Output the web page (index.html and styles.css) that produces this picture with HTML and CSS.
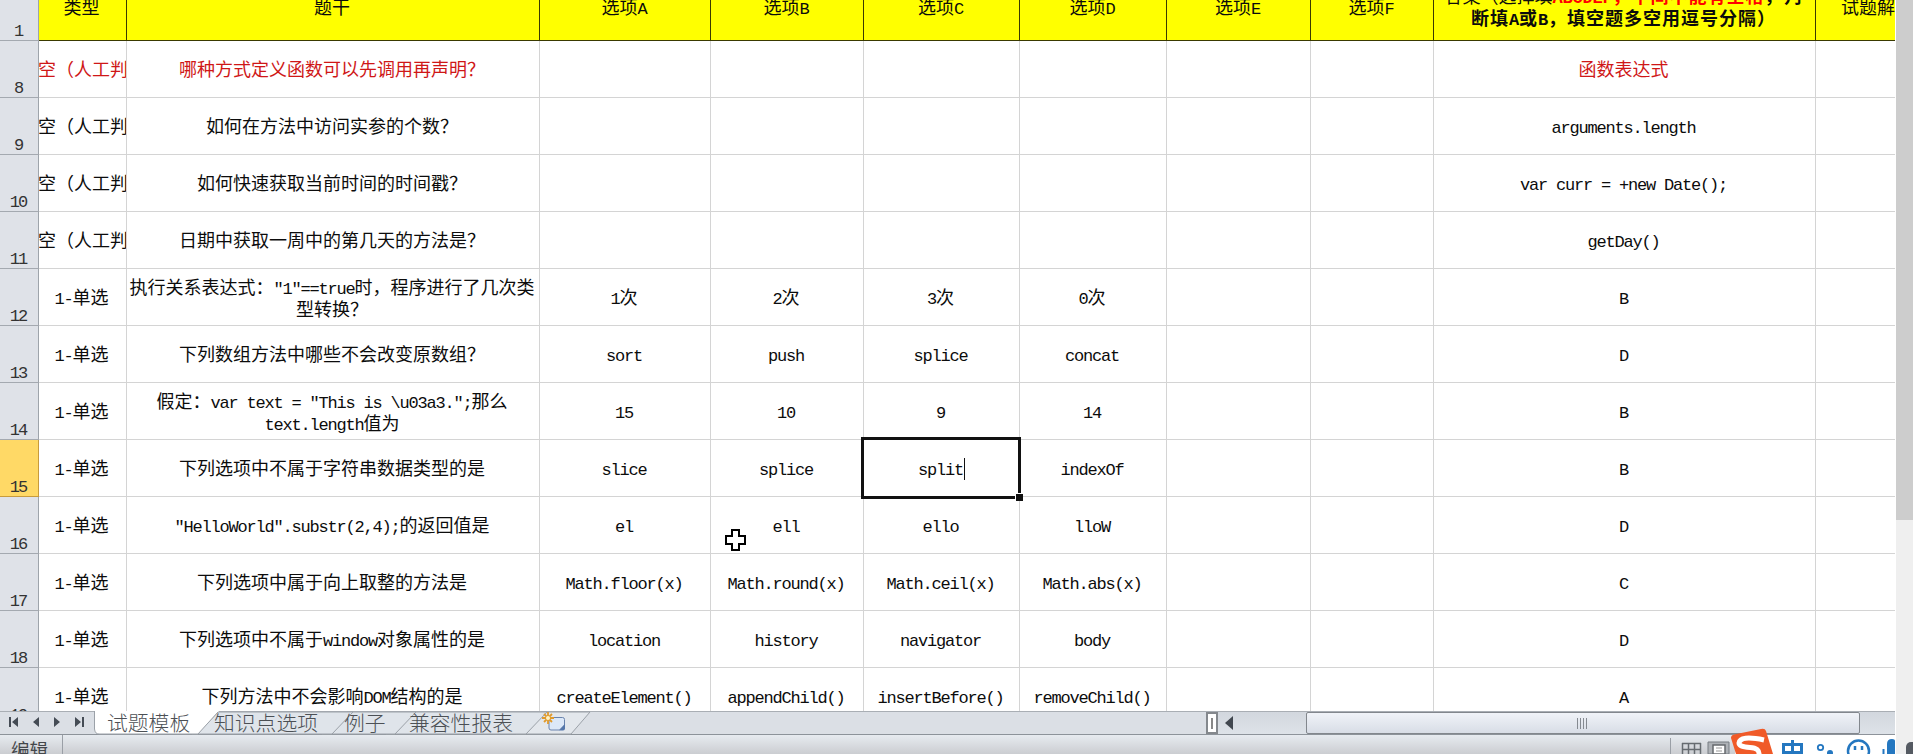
FILE: index.html
```html
<!DOCTYPE html>
<html lang="zh-CN">
<head>
<meta charset="utf-8">
<title>试题模板</title>
<link rel="stylesheet" href="styles.css">
</head>
<body>
<div class="app">
  <div class="window">
    <div class="sheet">
      <div class="grid">
        <div class="row head">
          <div class="num">1</div><div class="c">类型</div><div class="c">题干</div><div class="c">选项<i>A</i></div><div class="c">选项<i>B</i></div><div class="c">选项<i>C</i></div><div class="c">选项<i>D</i></div><div class="c">选项<i>E</i></div><div class="c">选项<i>F</i></div>
          <div class="c answer"><p><span>答案（选择填</span><b class="hot"><i>ABCDEF</i>，中间不能有空格</b><b>，判</b></p><p><b>断填<i>A</i>或<i>B</i>，填空题多空用逗号分隔）</b></p></div>
          <div class="c last">试题解</div>
        </div>
        <div class="row red"><div class="num">8</div><div class="c kind">空（人工判</div><div class="c">哪种方式定义函数可以先调用再声明？</div><div class="c"></div><div class="c"></div><div class="c"></div><div class="c"></div><div class="c"></div><div class="c"></div><div class="c">函数表达式</div><div class="c last"></div></div>
        <div class="row"><div class="num">9</div><div class="c kind">空（人工判</div><div class="c">如何在方法中访问实参的个数？</div><div class="c"></div><div class="c"></div><div class="c"></div><div class="c"></div><div class="c"></div><div class="c"></div><div class="c"><i>arguments.length</i></div><div class="c last"></div></div>
        <div class="row"><div class="num">10</div><div class="c kind">空（人工判</div><div class="c">如何快速获取当前时间的时间戳？</div><div class="c"></div><div class="c"></div><div class="c"></div><div class="c"></div><div class="c"></div><div class="c"></div><div class="c"><i>var curr = +new Date();</i></div><div class="c last"></div></div>
        <div class="row"><div class="num">11</div><div class="c kind">空（人工判</div><div class="c">日期中获取一周中的第几天的方法是？</div><div class="c"></div><div class="c"></div><div class="c"></div><div class="c"></div><div class="c"></div><div class="c"></div><div class="c"><i>getDay()</i></div><div class="c last"></div></div>
        <div class="row"><div class="num">12</div><div class="c"><i>1-</i>单选</div><div class="c two"><p>执行关系表达式：<i>"1"==true</i>时，程序进行了几次类</p><p>型转换？</p></div><div class="c"><i>1</i>次</div><div class="c"><i>2</i>次</div><div class="c"><i>3</i>次</div><div class="c"><i>0</i>次</div><div class="c"></div><div class="c"></div><div class="c"><i>B</i></div><div class="c last"></div></div>
        <div class="row"><div class="num">13</div><div class="c"><i>1-</i>单选</div><div class="c">下列数组方法中哪些不会改变原数组？</div><div class="c"><i>sort</i></div><div class="c"><i>push</i></div><div class="c"><i>splice</i></div><div class="c"><i>concat</i></div><div class="c"></div><div class="c"></div><div class="c"><i>D</i></div><div class="c last"></div></div>
        <div class="row"><div class="num">14</div><div class="c"><i>1-</i>单选</div><div class="c two"><p>假定：<i>var text = "This is \u03a3.";</i>那么</p><p><i>text.length</i>值为</p></div><div class="c"><i>15</i></div><div class="c"><i>10</i></div><div class="c"><i>9</i></div><div class="c"><i>14</i></div><div class="c"></div><div class="c"></div><div class="c"><i>B</i></div><div class="c last"></div></div>
        <div class="row current"><div class="num">15</div><div class="c"><i>1-</i>单选</div><div class="c">下列选项中不属于字符串数据类型的是</div><div class="c"><i>slice</i></div><div class="c"><i>splice</i></div><div class="c selected"><i>split</i><span class="caret"></span><span class="handle"></span></div><div class="c"><i>indexOf</i></div><div class="c"></div><div class="c"></div><div class="c"><i>B</i></div><div class="c last"></div></div>
        <div class="row"><div class="num">16</div><div class="c"><i>1-</i>单选</div><div class="c"><i>"HelloWorld".substr(2,4);</i>的返回值是</div><div class="c"><i>el</i></div><div class="c"><i>ell</i></div><div class="c"><i>ello</i></div><div class="c"><i>lloW</i></div><div class="c"></div><div class="c"></div><div class="c"><i>D</i></div><div class="c last"></div></div>
        <div class="row"><div class="num">17</div><div class="c"><i>1-</i>单选</div><div class="c">下列选项中属于向上取整的方法是</div><div class="c"><i>Math.floor(x)</i></div><div class="c"><i>Math.round(x)</i></div><div class="c"><i>Math.ceil(x)</i></div><div class="c"><i>Math.abs(x)</i></div><div class="c"></div><div class="c"></div><div class="c"><i>C</i></div><div class="c last"></div></div>
        <div class="row"><div class="num">18</div><div class="c"><i>1-</i>单选</div><div class="c">下列选项中不属于<i>window</i>对象属性的是</div><div class="c"><i>location</i></div><div class="c"><i>history</i></div><div class="c"><i>navigator</i></div><div class="c"><i>body</i></div><div class="c"></div><div class="c"></div><div class="c"><i>D</i></div><div class="c last"></div></div>
        <div class="row"><div class="num">19</div><div class="c"><i>1-</i>单选</div><div class="c">下列方法中不会影响<i>DOM</i>结构的是</div><div class="c"><i>createElement()</i></div><div class="c"><i>appendChild()</i></div><div class="c"><i>insertBefore()</i></div><div class="c"><i>removeChild()</i></div><div class="c"></div><div class="c"></div><div class="c"><i>A</i></div><div class="c last"></div></div>
      </div>
      <svg class="pointer" width="26" height="26" viewBox="0 0 26 26"><path d="M9 2h7v6h6v8h-6v6h-7v-6h-6v-8h6z" fill="#000" transform="translate(1 1)"/><path d="M9 2h7v6h6v8h-6v6h-7v-6h-6v-8h6z" fill="#fff" stroke="#000" stroke-width="2"/></svg>
    </div>

    <div class="tabbar">
      <svg class="tabshapes" width="620" height="24" viewBox="0 0 620 24">
        <path d="M541 1H590L571 23H516L523 21Z" fill="#e3e7ec" stroke="#9ba1a8"/>
        <path d="M410 1H547L526 23H386L393 21Z" fill="#dfe4ea" stroke="#9ba1a8"/>
        <path d="M347 1H416L395 23H322L329 21Z" fill="#dfe4ea" stroke="#9ba1a8"/>
        <path d="M218 1H353L332 23H192L199 21Z" fill="#dfe4ea" stroke="#9ba1a8"/>
        <path d="M94 0H219L198 23H99Q95 23 94 18Z" fill="#fff"/>
        <path d="M94.500 0V18Q95 23 99 23H198L218 1" fill="none" stroke="#9ba1a8"/>
        <g fill="#454c55"><path d="M9 6h2v10H9zM18 6v10l-6-5zM39 6v10l-6-5zM54 6v10l6-5zM75 6v10l6-5zM82 6h2v10h-2z"/></g>
        <path d="M552 6.500h10.500q2 0 2 2V14l-5 5H551q-2 0-2-2V9z" fill="#dce8f8" stroke="#6a83ad"/><path d="M565 13l-6 6.500h4q2 0 2-2z" fill="#5577ab"/>
        <path d="M548 1v12M542 7h12M544 3l8 8M552 3l-8 8" stroke="#e09a2c" stroke-width="1.800"/><circle cx="548" cy="7" r="2" fill="#fff4c8"/>
      </svg>
      <div class="tabs"><span class="tab t1">试题模板</span><span class="tab t2">知识点选项</span><span class="tab t3">例子</span><span class="tab t4">兼容性报表</span></div>
      <div class="hscroll">
        <div class="splitter"></div>
        <svg class="left" width="8" height="14" viewBox="0 0 8 14"><path d="M8 0v14L0 7z" fill="#41474f"/></svg>
        <div class="thumb"><span class="grip"></span></div>
      </div>
    </div>

    <div class="status">
      <div class="mode">编辑</div>
      <svg class="tray" width="226" height="26" viewBox="1669 728 226 26">
        <path d="M1735 735H1895V754H1735z" fill="#fff"/>
        <path d="M1670.500 738v16" stroke="#9a9fa6"/>
        <path d="M1682 743.500h19M1682 749.500h19M1682.500 743v11M1688.500 743v11M1694.500 743v11M1700.500 743v11" stroke="#666b70" stroke-width="1.500"/>
        <path d="M1708 742h21v12h-21z" fill="#aeb2b7" stroke="#777c82"/><path d="M1713 745h12v9h-12z" fill="#fff" stroke="#65696e" stroke-width="1.500"/><path d="M1716 748h6M1716 751h6" stroke="#999"/>
        <path d="M1731 738Q1731 735 1734 734.500L1761 729Q1765 728 1766 731L1773 754H1736z" fill="#f05a28"/>
        <path d="M1764 740Q1740 735 1739 743Q1739 747 1750 747.500Q1760 748 1759 755" fill="none" stroke="#fff" stroke-width="5"/>
        <path d="M1783.500 744.500h18v8h-18zM1792.500 740v14" fill="none" stroke="#2477c0" stroke-width="3"/>
        <circle cx="1820.500" cy="747.500" r="2.700" fill="none" stroke="#2477c0" stroke-width="1.800"/><circle cx="1830" cy="753" r="3" fill="#2477c0"/>
        <circle cx="1858.500" cy="751" r="10.500" fill="none" stroke="#2477c0" stroke-width="2.500"/><path d="M1855 746v4M1862 746v4" stroke="#2477c0" stroke-width="2.500"/>
        <path d="M1887 754v-10q0-5 5-5q3 0 3 2v13z" fill="#2477c0"/><path d="M1883.500 749v5" stroke="#2477c0" stroke-width="2"/>
      </svg>
    </div>
  </div>
  <div class="pagescroll"><div class="pagethumb"></div><div class="corner"></div></div>
</div>
</body>
</html>
```
FILE: styles.css
```css
* { box-sizing: border-box; }
body { margin: 0; overflow: hidden; font-family: "Noto Sans CJK SC", sans-serif; background: #fff; }
.app { display: flex; width: 1913px; height: 754px; overflow: hidden; }
.window { width: 1896px; height: 754px; display: flex; flex-direction: column; }
.sheet { position: relative; height: 711px; width: 1895px; overflow: hidden; flex: none; }
.grid { margin-top: -28px; }
.row {
  display: grid;
  grid-template-columns: 39px 88px 413px 171px 153px 156px 147px 144px 123px 382px 79px;
  height: 57px;
  font-size: 18px;
  color: #0c0c0c;
}
.num {
  background: #dfe2e8;
  border-right: 1px solid #9ea4ab;
  border-bottom: 1px solid #a4a9b0;
  display: flex;
  align-items: flex-end;
  justify-content: center;
  font: 17px/17px "Liberation Mono", monospace;
  letter-spacing: -2px;
  color: #333;
  padding-right: 2px;
}
.c {
  text-align: center;
  line-height: 55px;
  height: 100%;
  border-right: 1px solid #d4d4d4;
  border-bottom: 1px solid #d4d4d4;
  white-space: nowrap;
  overflow: hidden;
  padding-right: 2px;
}
.kind { text-indent: -1px; padding-right: 0; }
.c i { font: 17px/1 "Liberation Mono", monospace; letter-spacing: -1.2px; white-space: pre; }
.c p { margin: 0; height: 22px; line-height: 22px; }
.two { padding-top: 6px; }
.red { color: #cf1717; }
.red .num { color: #333; }
.head { height: 69px; }
.head .c { background: #ff0; border-color: #3a3a00; line-height: 68px; }
.head .last { text-align: left; padding-left: 25px; }
.last, .head .last { border-right: 0; }
.head .answer { padding-top: 12px; display: flex; flex-direction: column; align-items: center; }
.answer b { letter-spacing: 1px; }
.answer b i { font-weight: bold; letter-spacing: -0.2px; }
.answer .hot { color: #f00; }
.current .num { background: #ffd966; border-color: #c89b3c; }
.selected { position: relative; overflow: visible; }
.selected::before { content: ""; position: absolute; inset: -3px -2px -3px -3px; border: 3px solid #111; }
.caret { display: inline-block; vertical-align: -5px; width: 1px; height: 22px; background: #111; margin-left: 1px; margin-right: -2px; }
.handle { position: absolute; right: -4px; bottom: -5px; width: 8px; height: 8px; background: #111; border-top: 1px solid #fff; border-left: 1px solid #fff; }
.pointer { position: absolute; left: 723px; top: 528px; }

.tabbar { position: relative; display: flex; height: 24px; width: 1895px; flex: none; background: #dbdfe5; border-top: 1px solid #a9aeb4; border-bottom: 1px solid #8d939a; }
.tabshapes { position: absolute; left: 0; top: -1px; }
.tabs { position: relative; display: flex; width: 1206px; padding-left: 107px; }
.tab { font-size: 20.800px; line-height: 20px; height: 22px; color: #4c5055; white-space: nowrap; font-weight: 300; }
.t1 { width: 107px; }
.t2 { width: 130px; }
.t3 { width: 65px; }
.hscroll { display: flex; align-items: center; width: 689px; background: linear-gradient(#d2d7de, #dde2e8); }
.splitter { width: 12px; height: 22px; border: 2px solid #84888d; background: linear-gradient(90deg, #fff 3px, #888 3px, #888 5px, #fff 5px) center / 8px 11px no-repeat #fff; }
.left { margin-left: 7px; }
.thumb { margin-left: 73px; width: 554px; height: 22px; border: 1px solid #82878d; border-radius: 2px; background: linear-gradient(#f0f3f8, #d8dde6); display: flex; align-items: center; justify-content: center; padding-right: 2px; }
.grip { width: 11px; height: 11px; background: repeating-linear-gradient(90deg, #858a91 0 1px, transparent 1px 3px); }
.status { position: relative; display: flex; justify-content: space-between; height: 19px; width: 1895px; background: linear-gradient(#e7ebf0, #cbcdd1); }
.mode { width: 63px; height: 19px; overflow: hidden; border-right: 1px solid #9a9fa6; padding-left: 11px; font-size: 18.500px; line-height: 29px; color: #44474b; }
.tray { margin-top: -7px; }
.pagescroll { width: 17px; height: 754px; background: #efefef; position: relative; }
.pagethumb { height: 520px; background: #cdcdcd; }
.corner { position: absolute; right: 0; bottom: 0; width: 7px; height: 12px; border-radius: 5px 0 0 0; background: #555a62; }
```
